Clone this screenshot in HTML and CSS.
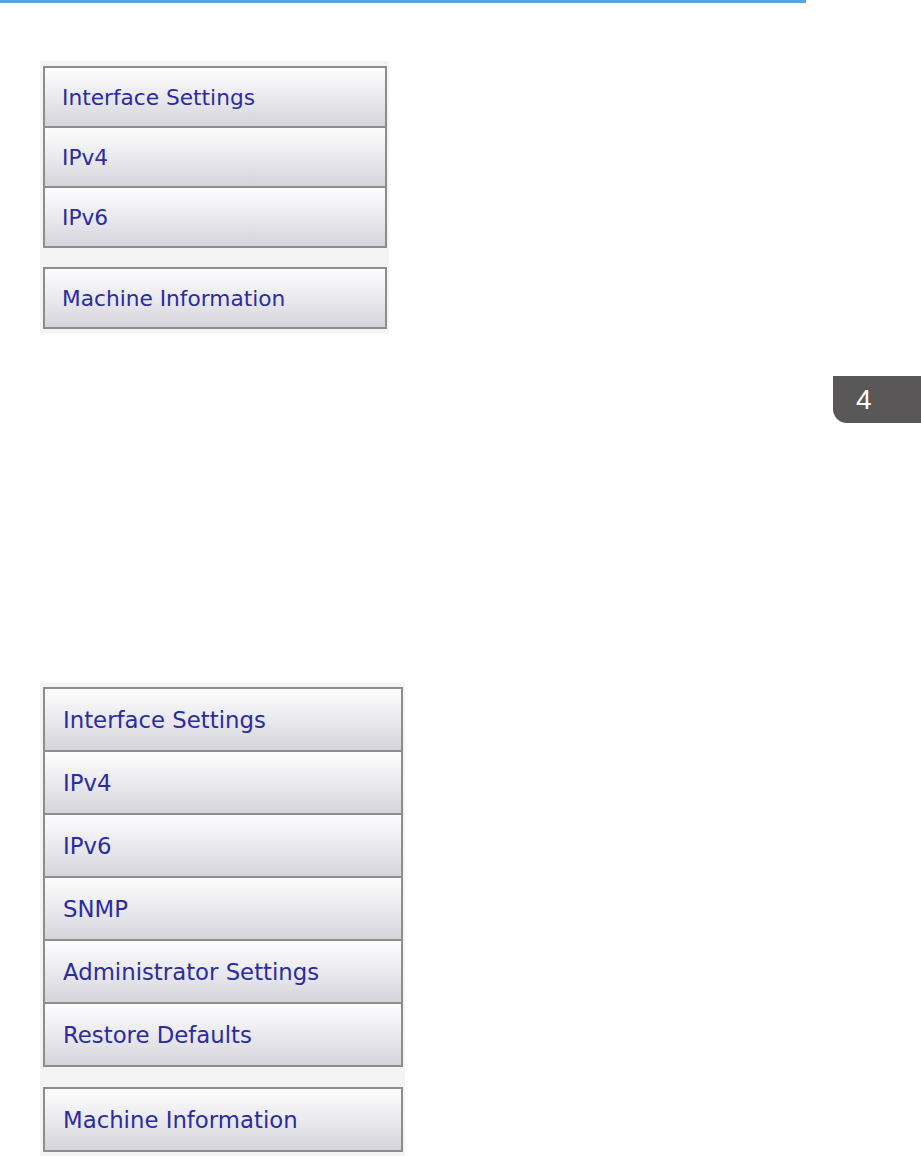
FILE: index.html
```html
<!DOCTYPE html>
<html lang="en">
<head>
<meta charset="utf-8">
<title>Menu</title>
<link rel="stylesheet" href="styles.css">
</head>
<body>
<div class="rule"></div>

<div class="panel panel-small">
  <div class="group">
    <div class="item">Interface Settings</div>
    <div class="item">IPv4</div>
    <div class="item">IPv6</div>
  </div>
  <div class="group">
    <div class="item">Machine Information</div>
  </div>
</div>

<div class="panel panel-large">
  <div class="group">
    <div class="item">Interface Settings</div>
    <div class="item">IPv4</div>
    <div class="item">IPv6</div>
    <div class="item">SNMP</div>
    <div class="item">Administrator Settings</div>
    <div class="item">Restore Defaults</div>
  </div>
  <div class="group">
    <div class="item">Machine Information</div>
  </div>
</div>

<div class="chapter-tab">4</div>
</body>
</html>
```

FILE: styles.css
```css
html, body {
  margin: 0;
  padding: 0;
  background: #ffffff;
}

body {
  position: relative;
  width: 921px;
  height: 1156px;
  overflow: hidden;
  font-family: "DejaVu Sans", Verdana, sans-serif;
}

.rule {
  width: 806px;
  height: 3px;
  background: #56a3de;
}

.panel {
  margin-left: 40px;
  background: #f4f4f4;
  display: flex;
  flex-direction: column;
}

.panel-small {
  margin-top: 58px;
  width: 344px;
  padding: 5px 2px 4px 3px;
  gap: 19px;
}

.panel-large {
  margin-top: 350px;
  width: 360px;
  padding: 4px 2px 6px 3px;
  gap: 20px;
}

.group {
  border: 2px solid #8d8d8d;
  border-bottom: none;
  display: flex;
  flex-direction: column;
}

.item {
  display: flex;
  align-items: center;
  border-bottom: 2px solid #8d8d8d;
  background: linear-gradient(#fdfdfe 0%, #ececf0 45%, #d4d4db 100%);
  color: #2c2c9e;
  padding-left: 17px;
  box-sizing: border-box;
}

.panel-small .item {
  height: 60px;
  font-size: 21.7px;
}

.panel-large .item {
  height: 63px;
  font-size: 22.8px;
  padding-left: 18px;
}

.chapter-tab {
  position: absolute;
  left: 833px;
  top: 376px;
  width: 88px;
  height: 47px;
  background: #595757;
  border-bottom-left-radius: 14px;
  color: #ffffff;
  font-family: "Liberation Sans", Arial, sans-serif;
  font-size: 28px;
  line-height: 47px;
  padding-left: 23px;
  box-sizing: border-box;
}
```
